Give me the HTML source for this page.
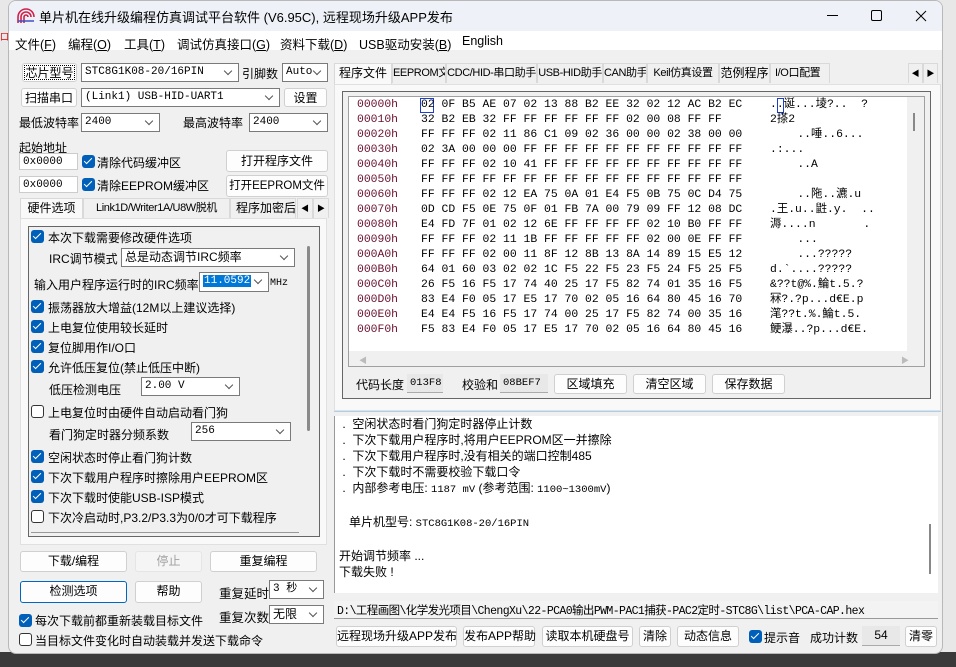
<!DOCTYPE html>
<html><head><meta charset="utf-8"><style>
*{box-sizing:border-box;margin:0;padding:0}
body{width:956px;height:667px;overflow:hidden;background:#e8e8e8;font-family:"Liberation Sans","Noto Sans CJK SC",sans-serif;font-size:12px;color:#000;position:relative}
.a{position:absolute;white-space:nowrap}
#desk{left:0;top:652px;width:956px;height:15px;background:#3a3a3a}
#win{left:8px;top:0;width:935px;height:654px;background:#f0f0f0;border:1px solid #b8b8b8;border-radius:8px;overflow:hidden}
.btn{position:absolute;background:#fdfdfd;border:1px solid #d0d0d0;border-radius:3px;text-align:center;font-size:12px;line-height:18px;white-space:nowrap}
.cb{position:absolute;background:#fff;border:1px solid #7a7a7a;font-family:"Liberation Mono","Noto Sans CJK SC",monospace;font-size:11px;line-height:16px;padding-left:3px;overflow:hidden;white-space:nowrap}
.cb:after{content:"";position:absolute;right:7px;top:4px;width:5px;height:5px;border-right:1px solid #555;border-bottom:1px solid #555;transform:rotate(45deg)}
.cb.na:after{display:none}
.ck{position:absolute;width:13px;height:13px;background:#005fb8;border-radius:3px}
.ck:after{content:"";position:absolute;left:4px;top:1px;width:3px;height:7px;border-right:1.5px solid #fff;border-bottom:1.5px solid #fff;transform:rotate(45deg)}
.un{position:absolute;width:13px;height:13px;border:1px solid #333;border-radius:3px;background:#fff}
.tab{position:absolute;top:0;height:20px;border:1px solid #d9d9d9;border-bottom:none;background:#f0f0f0;line-height:19px;text-align:center;font-size:12px;white-space:nowrap;overflow:hidden}
.rt{font-size:11px;letter-spacing:-0.4px}
.mono{font-family:"Liberation Mono","Noto Sans CJK SC",monospace}
.hx{position:absolute;font-family:"Liberation Mono","Noto Sans CJK SC",monospace;font-size:11.4px;line-height:15px;white-space:pre}
.hx div{height:15px;line-height:15px}
.log{font-size:12px;line-height:16px}
</style></head><body>
<div class="a" style="left:0;top:30px;width:8px;height:14px;color:#d00;font-size:9px">口</div>
<div class="a" id="desk"></div>
<div class="a" id="win">
 <div class="a" style="left:0;top:0;width:935px;height:30px;background:#eef2f8"></div>
 <svg class="a" style="left:8px;top:7px" width="18" height="16" viewBox="0 0 18 16"><path d="M1 15V9a8 8 0 0 1 16 0M4 15V9a5 5 0 0 1 10 0M7 15V9a2 2 0 0 1 4 0" fill="none" stroke="#d0204a" stroke-width="1.6"/><path d="M1 13h16" stroke="#4050c0" stroke-width="1.5"/></svg>
 <div class="a" style="left:30px;top:6px;font-size:13px">单片机在线升级编程仿真调试平台软件 (V6.95C), 远程现场升级APP发布</div>
 <div class="a" style="left:818px;top:14px;width:11px;height:1px;background:#000"></div>
 <div class="a" style="left:862px;top:9px;width:11px;height:11px;border:1px solid #000;border-radius:2px"></div>
 <svg class="a" style="left:906px;top:9px" width="12" height="12"><path d="M1 1L11 11M11 1L1 11" stroke="#000" stroke-width="1"/></svg>
 <div class="a" style="left:0;top:30px;width:935px;height:19px;background:#fff"></div>
 <div class="a" style="left:6px;top:33px;font-size:12.5px">文件(<u>F</u>)</div>
 <div class="a" style="left:59px;top:33px;font-size:12.5px">编程(<u>O</u>)</div>
 <div class="a" style="left:115px;top:33px;font-size:12.5px">工具(<u>T</u>)</div>
 <div class="a" style="left:168px;top:33px;font-size:12.5px">调试仿真接口(<u>G</u>)</div>
 <div class="a" style="left:271px;top:33px;font-size:12.5px">资料下载(<u>D</u>)</div>
 <div class="a" style="left:350px;top:33px;font-size:12.5px">USB驱动安装(<u>B</u>)</div>
 <div class="a" style="left:453px;top:33px;font-size:12.5px">English</div>

 <div class="btn" style="left:13px;top:62px;width:55px;height:19px;outline:1px dotted #000;outline-offset:-3px">芯片型号</div>
 <div class="cb" style="left:72px;top:62px;width:158px;height:19px">STC8G1K08-20/16PIN</div>
 <div class="a" style="left:233px;top:64px">引脚数</div>
 <div class="cb" style="left:273px;top:62px;width:46px;height:19px">Auto</div>
 <div class="btn" style="left:12px;top:87px;width:56px;height:19px">扫描串口</div>
 <div class="cb" style="left:72px;top:87px;width:199px;height:19px">(Link1) USB-HID-UART1</div>
 <div class="btn" style="left:275px;top:87px;width:43px;height:19px">设置</div>
 <div class="a" style="left:10px;top:113px">最低波特率</div>
 <div class="cb" style="left:72px;top:112px;width:79px;height:19px">2400</div>
 <div class="a" style="left:174px;top:113px">最高波特率</div>
 <div class="cb" style="left:240px;top:112px;width:79px;height:19px">2400</div>
 <div class="a" style="left:10px;top:138px">起始地址</div>
 <div class="cb na" style="left:10px;top:152px;width:59px;height:17px;border-color:#ccc">0x0000</div>
 <div class="ck" style="left:73px;top:154px"></div><div class="a" style="left:88px;top:153px">清除代码缓冲区</div>
 <div class="btn" style="left:217px;top:149px;width:102px;height:22px;line-height:20px">打开程序文件</div>
 <div class="cb na" style="left:10px;top:175px;width:59px;height:17px;border-color:#ccc">0x0000</div>
 <div class="ck" style="left:73px;top:177px"></div><div class="a" style="left:88px;top:176px">清除EEPROM缓冲区</div>
 <div class="btn" style="left:217px;top:174px;width:102px;height:22px;line-height:20px;font-size:11.5px">打开EEPROM文件</div>
 <div class="a" style="left:11px;top:197px;width:310px;height:20px">
  <div class="tab" style="left:0;width:63px;background:#f9f9f9;height:21px">硬件选项</div>
  <div class="tab rt" style="left:63px;width:147px">Link1D/Writer1A/U8W脱机</div>
  <div class="tab" style="left:210px;width:66px;text-align:left;padding-left:5px">程序加密后</div>
  <div class="tab" style="left:277px;width:16px;font-size:8px">◀</div>
  <div class="tab" style="left:293px;width:16px;font-size:8px">▶</div>
 </div>
 <div class="a" style="left:11px;top:217px;width:307px;height:327px;background:#f9f9f9;border:1px solid #e0e0e0"></div>
 <div class="a" style="left:19px;top:225px;width:292px;height:311px;border:1px solid #666;background:#f0f0f0"></div>
 <div class="a" style="left:22px;top:531px;width:268px;height:1px;background:#999"></div>
 <div class="a" style="left:298px;top:245px;width:3px;height:185px;background:#8a8a8a;border-radius:2px"></div>
 <div class="ck" style="left:22px;top:229px"></div><div class="a" style="left:39px;top:228px">本次下载需要修改硬件选项</div>
 <div class="a" style="left:40px;top:249px">IRC调节模式</div>
 <div class="cb" style="left:112px;top:247px;width:174px;height:19px;font-family:'Liberation Sans','Noto Sans CJK SC',sans-serif;font-size:12px">总是动态调节IRC频率</div>
 <div class="a" style="left:25px;top:275px">输入用户程序运行时的IRC频率</div>
 <div class="cb" style="left:190px;top:271px;width:70px;height:20px"><span style="background:#0078d7;color:#fff;padding:0 1px">11.0592</span></div>
 <div class="a mono" style="left:261px;top:277px;font-size:10px">MHz</div>
 <div class="ck" style="left:22px;top:299px"></div><div class="a" style="left:39px;top:298px">振荡器放大增益(12M以上建议选择)</div>
 <div class="ck" style="left:22px;top:319px"></div><div class="a" style="left:39px;top:318px">上电复位使用较长延时</div>
 <div class="ck" style="left:22px;top:339px"></div><div class="a" style="left:39px;top:338px">复位脚用作I/O口</div>
 <div class="ck" style="left:22px;top:359px"></div><div class="a" style="left:39px;top:358px">允许低压复位(禁止低压中断)</div>
 <div class="a" style="left:40px;top:380px">低压检测电压</div>
 <div class="cb" style="left:132px;top:376px;width:99px;height:19px">2.00 V</div>
 <div class="un" style="left:22px;top:404px"></div><div class="a" style="left:39px;top:403px">上电复位时由硬件自动启动看门狗</div>
 <div class="a" style="left:40px;top:425px">看门狗定时器分频系数</div>
 <div class="cb" style="left:182px;top:421px;width:100px;height:19px">256</div>
 <div class="ck" style="left:22px;top:449px"></div><div class="a" style="left:39px;top:448px">空闲状态时停止看门狗计数</div>
 <div class="ck" style="left:22px;top:469px"></div><div class="a" style="left:39px;top:468px">下次下载用户程序时擦除用户EEPROM区</div>
 <div class="ck" style="left:22px;top:489px"></div><div class="a" style="left:39px;top:488px">下次下载时使能USB-ISP模式</div>
 <div class="un" style="left:22px;top:509px"></div><div class="a" style="left:39px;top:508px">下次冷启动时,P3.2/P3.3为0/0才可下载程序</div>
 <div class="btn" style="left:11px;top:550px;width:107px;height:21px">下载/编程</div>
 <div class="btn" style="left:126px;top:550px;width:67px;height:21px;background:#f5f5f5;color:#a0a0a0;border-color:#e5e5e5">停止</div>
 <div class="btn" style="left:201px;top:550px;width:107px;height:21px">重复编程</div>
 <div class="btn" style="left:11px;top:580px;width:107px;height:22px;border:1px solid #0067c0">检测选项</div>
 <div class="btn" style="left:126px;top:580px;width:67px;height:22px">帮助</div>
 <div class="a" style="left:210px;top:582px;font-size:12.5px">重复延时</div>
 <div class="cb" style="left:260px;top:579px;width:55px;height:19px">3 秒</div>
 <div class="a" style="left:210px;top:606px;font-size:12.5px">重复次数</div>
 <div class="cb" style="left:260px;top:604px;width:55px;height:19px;font-family:'Liberation Sans','Noto Sans CJK SC',sans-serif;font-size:12px">无限</div>
 <div class="ck" style="left:10px;top:613px"></div><div class="a" style="left:26px;top:611px">每次下载前都重新装载目标文件</div>
 <div class="un" style="left:10px;top:632px"></div><div class="a" style="left:26px;top:631px">当目标文件变化时自动装载并发送下载命令</div>

 <div class="a" style="left:325px;top:62px;width:610px;height:21px">
  <div class="tab" style="left:0;width:58px;background:#f9f9f9;height:22px">程序文件</div>
  <div class="tab rt" style="left:58px;width:54px">EEPROM文件</div>
  <div class="tab rt" style="left:112px;width:91px">CDC/HID-串口助手</div>
  <div class="tab rt" style="left:203px;width:66px">USB-HID助手</div>
  <div class="tab rt" style="left:269px;width:44px">CAN助手</div>
  <div class="tab rt" style="left:313px;width:72px">Keil仿真设置</div>
  <div class="tab" style="left:385px;width:51px">范例程序</div>
  <div class="tab rt" style="left:436px;width:60px;text-align:left;padding-left:4px">I/O口配置</div>
  <div class="tab" style="left:574px;width:15px;font-size:8px">◀</div>
  <div class="tab" style="left:589px;width:15px;font-size:8px">▶</div>
 </div>
 <div class="a" style="left:325px;top:83px;width:607px;height:327px;background:#f9f9f9;border:1px solid #e0e0e0"></div>
 <div class="a" style="left:333px;top:90px;width:589px;height:308px;border:1px solid #666;background:#f0f0f0"></div>
 <div class="a" style="left:339px;top:95px;width:577px;height:271px;border:1px solid #a0a0a0;background:#f0f0f0"></div>
 <div class="a" style="left:340px;top:96px;width:558px;height:254px;background:#fff"></div>
 <div class="a" style="left:904px;top:112px;width:2px;height:18px;background:#888"></div>
 <div class="a" style="left:350px;top:354px;color:#bbb;font-size:8px">◀</div>
 <div class="a" style="left:892px;top:354px;color:#bbb;font-size:8px">▶</div>
 <div class="hx" style="left:348px;top:97px;color:#6a1030"><div>00000h</div><div>00010h</div><div>00020h</div><div>00030h</div><div>00040h</div><div>00050h</div><div>00060h</div><div>00070h</div><div>00080h</div><div>00090h</div><div>000A0h</div><div>000B0h</div><div>000C0h</div><div>000D0h</div><div>000E0h</div><div>000F0h</div></div>
 <div class="a" style="left:411px;top:97px;width:14px;height:15px;border:1px solid #1a3fd0"></div>
 <div class="a" style="left:768px;top:97px;width:7px;height:15px;border:1px solid #1a3fd0"></div>
 <div class="hx" style="left:412px;top:97px"><div>02 0F B5 AE 07 02 13 88 B2 EE 32 02 12 AC B2 EC</div><div>32 B2 EB 32 FF FF FF FF FF FF 02 00 08 FF FF</div><div>FF FF FF 02 11 86 C1 09 02 36 00 00 02 38 00 00</div><div>02 3A 00 00 00 FF FF FF FF FF FF FF FF FF FF FF</div><div>FF FF FF 02 10 41 FF FF FF FF FF FF FF FF FF FF</div><div>FF FF FF FF FF FF FF FF FF FF FF FF FF FF FF FF</div><div>FF FF FF 02 12 EA 75 0A 01 E4 F5 0B 75 0C D4 75</div><div>0D CD F5 0E 75 0F 01 FB 7A 00 79 09 FF 12 08 DC</div><div>E4 FD 7F 01 02 12 6E FF FF FF FF 02 10 B0 FF FF</div><div>FF FF FF 02 11 1B FF FF FF FF FF 02 00 0E FF FF</div><div>FF FF FF 02 00 11 8F 12 8B 13 8A 14 89 15 E5 12</div><div>64 01 60 03 02 02 1C F5 22 F5 23 F5 24 F5 25 F5</div><div>26 F5 16 F5 17 74 40 25 17 F5 82 74 01 35 16 F5</div><div>83 E4 F0 05 17 E5 17 70 02 05 16 64 80 45 16 70</div><div>E4 E4 F5 16 F5 17 74 00 25 17 F5 82 74 00 35 16</div><div>F5 83 E4 F0 05 17 E5 17 70 02 05 16 64 80 45 16</div></div>
 <div class="hx" style="left:761px;top:97px"><div>..诞...堎?..  ?</div><div>2搽2</div><div>    ..唾..6...</div><div>.:...</div><div>    ..A</div><div> </div><div>    ..陁..瀌.u</div><div>.王.u..鼪.y.  ..</div><div>溽....n       .</div><div>    ...</div><div>    ...?????</div><div>d.`....?????</div><div>&amp;??t@%.鯩t.5.?</div><div>冧?.?p...d€E.p</div><div>滗??t.%.鯩t.5.</div><div>鲠瀑..?p...d€E.</div></div>
 <div class="a" style="left:347px;top:375px">代码长度</div>
 <div class="a mono" style="left:398px;top:373px;width:36px;height:19px;background:#e8e8e8;border-bottom:1px solid #aaa;font-size:10.5px;line-height:18px;padding-left:3px">013F8</div>
 <div class="a" style="left:453px;top:375px">校验和</div>
 <div class="a mono" style="left:491px;top:373px;width:48px;height:19px;background:#e8e8e8;border-bottom:1px solid #aaa;font-size:10.5px;line-height:18px;padding-left:3px">08BEF7</div>
 <div class="btn" style="left:545px;top:373px;width:73px;height:20px">区域填充</div>
 <div class="btn" style="left:624px;top:373px;width:73px;height:20px">清空区域</div>
 <div class="btn" style="left:703px;top:373px;width:73px;height:20px">保存数据</div>
 <div class="a" style="left:325px;top:410px;width:607px;height:1px;background:#a8d0f0"></div>
 <div class="a" style="left:325px;top:415px;width:604px;height:177px;background:#fff;border-left:1px solid #999"></div>
 <div class="a" style="left:920px;top:523px;width:2px;height:50px;background:#888"></div>
 <div class="a log" style="left:330px;top:415px;white-space:pre"> .  空闲状态时看门狗定时器停止计数
 .  下次下载用户程序时,将用户EEPROM区一并擦除
 .  下次下载用户程序时,没有相关的端口控制485
 .  下次下载时不需要校验下载口令
 .  内部参考电压: <span class="mono" style="font-size:10.5px">1187 mV</span> (参考范围: <span class="mono" style="font-size:10.5px">1100~1300mV</span>)

   单片机型号: <span class="mono" style="font-size:10.5px">STC8G1K08-20/16PIN</span>

开始调节频率 ...
下载失败 !</div>
 <div class="a" style="left:325px;top:600px;width:604px;height:18px;background:#f3f3f3;border-bottom:1px solid #999"></div>
 <div class="a" style="left:328px;top:601px;font-size:11.5px;font-family:'Liberation Mono','Noto Sans CJK SC',monospace;letter-spacing:-0.6px">D:\工程画图\化学发光项目\ChengXu\22-PCA0输出PWM-PAC1捕获-PAC2定时-STC8G\list\PCA-CAP.hex</div>
 <div class="btn" style="left:327px;top:625px;width:121px;height:21px">远程现场升级APP发布</div>
 <div class="btn" style="left:454px;top:625px;width:72px;height:21px">发布APP帮助</div>
 <div class="btn" style="left:533px;top:625px;width:91px;height:21px">读取本机硬盘号</div>
 <div class="btn" style="left:630px;top:625px;width:32px;height:21px">清除</div>
 <div class="btn" style="left:668px;top:625px;width:62px;height:21px">动态信息</div>
 <div class="ck" style="left:740px;top:629px"></div><div class="a" style="left:755px;top:628px">提示音</div>
 <div class="a" style="left:801px;top:628px">成功计数</div>
 <div class="a" style="left:853px;top:625px;width:38px;height:20px;background:#e8e8e8;border-bottom:1px solid #aaa;text-align:center;line-height:19px">54</div>
 <div class="btn" style="left:896px;top:625px;width:32px;height:21px">清零</div>
</div>
</body></html>
